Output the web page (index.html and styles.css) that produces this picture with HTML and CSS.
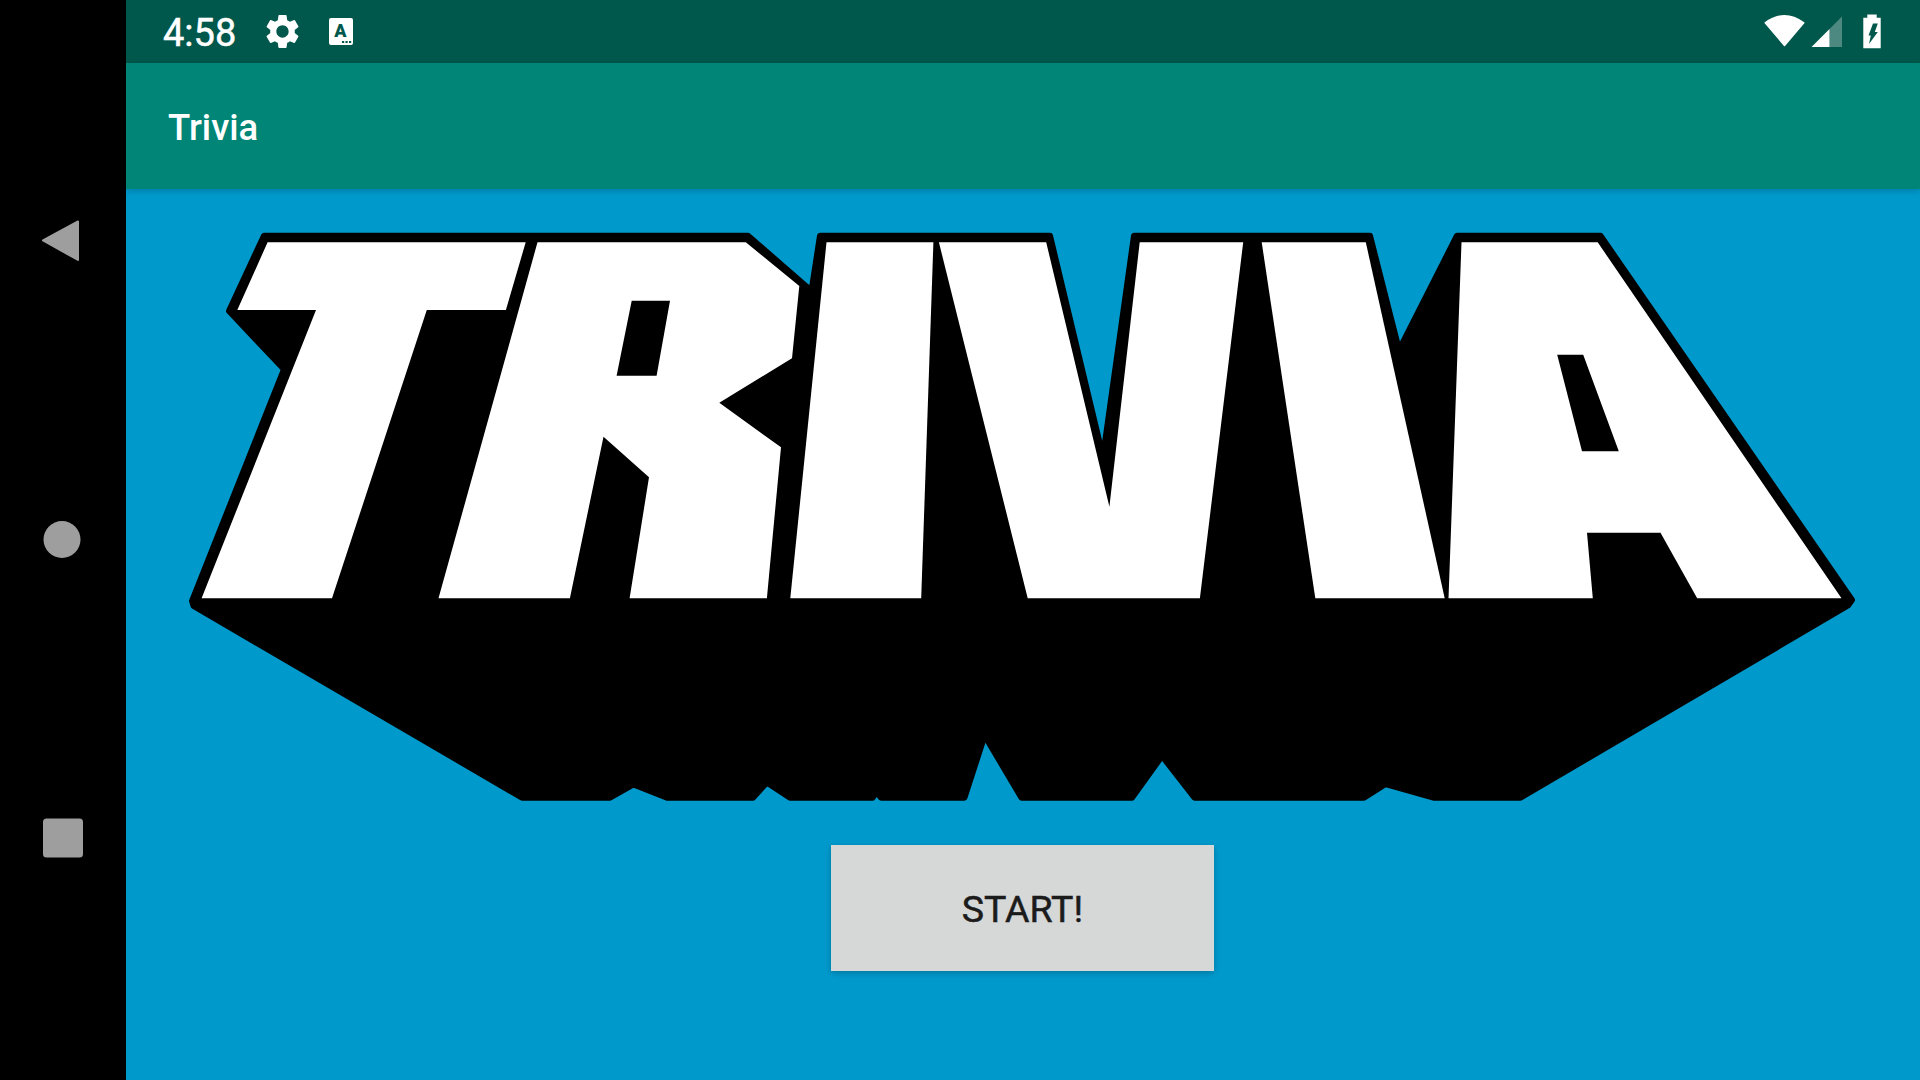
FILE: index.html
```html
<!DOCTYPE html>
<html lang="en">
<head>
<meta charset="utf-8">
<title>Trivia</title>
<link rel="stylesheet" href="styles.css">
</head>
<body>
<div class="screen">
  <nav class="nav">
    <svg class="nav-icon" viewBox="0 0 48 48"><polygon points="5,24.5 40,5.5 40,44" fill="#9e9e9e" stroke="#9e9e9e" stroke-width="2" stroke-linejoin="round"/></svg>
    <svg class="nav-icon" viewBox="0 0 48 48"><circle cx="24" cy="23.5" r="18.5" fill="#9e9e9e"/></svg>
    <svg class="nav-icon" viewBox="0 0 48 48"><rect x="5" y="2.5" width="40" height="39" rx="3.5" fill="#9e9e9e"/></svg>
  </nav>
  <main class="main">
    <header class="status">
      <span class="time">4:58</span>
      <svg class="gear" viewBox="0 0 24 24"><path fill="#fff" d="M19.14 12.94c.04-.3.06-.61.06-.94 0-.32-.02-.64-.07-.94l2.03-1.58a.49.49 0 0 0 .12-.61l-1.92-3.32a.488.488 0 0 0-.59-.22l-2.39.96c-.5-.38-1.03-.7-1.62-.94l-.36-2.54a.484.484 0 0 0-.48-.41h-3.84c-.24 0-.43.17-.47.41l-.36 2.54c-.59.24-1.13.57-1.62.94l-2.39-.96c-.22-.08-.47 0-.59.22L2.74 8.87c-.12.21-.08.47.12.61l2.03 1.58c-.05.3-.09.63-.09.94s.02.64.07.94l-2.03 1.58a.49.49 0 0 0-.12.61l1.92 3.32c.12.22.37.29.59.22l2.39-.96c.5.38 1.03.7 1.62.94l.36 2.54c.05.24.24.41.48.41h3.84c.24 0 .44-.17.47-.41l.36-2.54c.59-.24 1.13-.56 1.62-.94l2.39.96c.22.08.47 0 .59-.22l1.92-3.32c.12-.22.07-.47-.12-.61l-2.01-1.58zM12 15.6c-1.98 0-3.6-1.62-3.6-3.6s1.62-3.6 3.6-3.6 3.6 1.62 3.6 3.6-1.62 3.6-3.6 3.6z"/></svg>
    <svg class="kbd" viewBox="0 0 24 27">
        <rect width="24" height="27" rx="2" fill="#fff"/>
        <text class="kbd-a" x="11.5" y="18.5">A</text>
        <rect x="13" y="23" width="2.2" height="2" fill="#00574b"/>
        <rect x="16.5" y="23" width="2.2" height="2" fill="#00574b"/>
        <rect x="20" y="23" width="2.2" height="2" fill="#00574b"/>
      </svg>
      <svg class="wifi" viewBox="0 0 42 36"><path fill="#fff" stroke="#fff" stroke-width="1.5" stroke-linejoin="round" d="M1.2 8.8Q20.5-5.5 39.8 8.8L20.5 31.5Z"/></svg>
      <svg class="signal" viewBox="0 0 32 36">
        <polygon points="0.5,33 18.5,15 18.5,33" fill="#fff"/>
        <polygon points="18.5,15 31,2.5 31,33 18.5,33" fill="#fff" opacity=".3"/>
      </svg>
      <svg class="battery" viewBox="0 0 20 36">
        <path fill="#fff" d="M5.3.5h9.4v3.3h4v30.4H1.3V3.8h4z"/>
        <polygon fill="#00574b" points="11,9.5 15.8,9.5 12.8,18 15.8,18 7,30 8.8,21.5 6.5,21.5"/>
      </svg>
    </header>
    <div class="appbar">Trivia</div>
    <section class="content">
      <svg class="logo" viewBox="126 189 1794 656">
        <defs><filter id="soft" x="-2%" y="-2%" width="104%" height="104%"><feGaussianBlur stdDeviation="0.7"/></filter></defs>
        <g filter="url(#soft)">
          <polygon fill="#000" stroke="#000" stroke-width="6" stroke-linejoin="round" points="264,235.7 748,235.7 811.5,291 820,235.7 1050,235.7 1103,457 1134,235.7 1370,235.7 1399,350 1457,235.7 1600.5,235.7 1852,600 1848,605.5 1520.5,797.7 1433.5,797.7 1385.6,784 1364,797.7 1194.5,797.7 1162,756 1132,797.7 1021.5,797.7 984.6,735.5 964.5,797.7 881,797.7 876.5,792 872.5,797.7 790,797.7 766.8,782.6 753,797.7 667,797.7 633.5,784.5 610,797.7 522,797.7 193.5,606 192,601 284,369.3 229,311"/>
          <g fill="#fff">
            <polygon points="267.6,242.3 525.7,242.3 505.9,310 426.8,310 332,598.3 201.6,598.3 316,310 237.3,310"/>
            <path fill-rule="evenodd" d="M537.5 242.3H745.8L799.3 286 792 358.3 719.3 402.7 781 447.3 766.9 598.3H629.6L649 477.3 603.5 436.7 569.9 598.3H438.5ZM631.7 300.7H670L656.6 375.7H616.6Z"/>
            <polygon points="826.5,242.3 933.4,242.3 921.2,598.3 790.3,598.3"/>
            <polygon points="938.9,242.3 1046.2,242.3 1109.4,506.7 1139.7,242.3 1243.2,242.3 1199.9,598.3 1027.7,598.3"/>
            <polygon points="1261.7,242.3 1365.8,242.3 1444.7,598.3 1315.3,598.3"/>
            <path fill-rule="evenodd" d="M1461.5 242.3H1597.7L1841.5 598.3H1697.2L1660.5 532.7H1587L1592.8 598.3H1448.5ZM1557.2 354.7H1583.2L1618.8 451.3H1582Z"/>
          </g>
        </g>
      </svg>
      <button class="start" type="button">START!</button>
    </section>
  </main>
</div>
</body>
</html>
```
FILE: styles.css
```css
html, body {
  margin: 0;
  padding: 0;
  background: #000;
}

.screen {
  display: flex;
  width: 1920px;
  height: 1080px;
  overflow: hidden;
  font-family: Roboto, "Liberation Sans", sans-serif;
}

.nav {
  flex: 0 0 126px;
  display: flex;
  flex-direction: column;
  gap: 252px;
  padding: 216px 0 0 38px;
  box-sizing: border-box;
  background: #000;
}

.nav-icon {
  display: block;
  width: 48px;
  height: 48px;
}

.main {
  flex: 1;
  display: flex;
  flex-direction: column;
  min-width: 0;
}

.status {
  flex: 0 0 63px;
  display: flex;
  align-items: center;
  padding: 0 38px 0 37px;
  background: #00574b;
  color: #fff;
}

.time {
  margin-top: 2px;
  font-size: 38px;
  font-weight: 400;
  line-height: 1;
  -webkit-text-stroke: 0.5px #fff;
}

.gear {
  width: 41px;
  height: 41px;
  margin-left: 26px;
}

.kbd {
  width: 24px;
  height: 27px;
  margin-left: 26px;
}

.kbd-a {
  font-family: Roboto, sans-serif;
  font-size: 18px;
  font-weight: 900;
  fill: #00574b;
  text-anchor: middle;
}

.wifi {
  width: 42px;
  height: 36px;
  margin-left: auto;
}

.signal {
  width: 32px;
  height: 36px;
  margin-left: 4.5px;
}

.battery {
  width: 20px;
  height: 36px;
  margin-left: 19.5px;
}

.appbar {
  position: relative;
  z-index: 1;
  flex: 0 0 126px;
  display: flex;
  align-items: center;
  padding: 2px 0 0 42px;
  box-sizing: border-box;
  background: #008577;
  box-shadow: 0 2px 6px rgba(0, 0, 0, 0.18);
  color: #fff;
  font-size: 36.5px;
  font-weight: 500;
}

.content {
  flex: 1;
  display: flex;
  flex-direction: column;
  align-items: center;
  background: #0099cc;
}

.logo {
  display: block;
  flex: 0 0 656px;
  width: 1794px;
  height: 656px;
}

.start {
  width: 383px;
  height: 126px;
  margin-right: 1px;
  padding: 2px 0 0;
  border: 0;
  background: #d6d7d7;
  box-shadow: 0 2px 6px rgba(0, 0, 0, 0.22);
  color: #1b1b1b;
  font-family: Roboto, "Liberation Sans", sans-serif;
  font-size: 37.5px;
  font-weight: 400;
  -webkit-text-stroke: 0.5px #1b1b1b;
}
```
